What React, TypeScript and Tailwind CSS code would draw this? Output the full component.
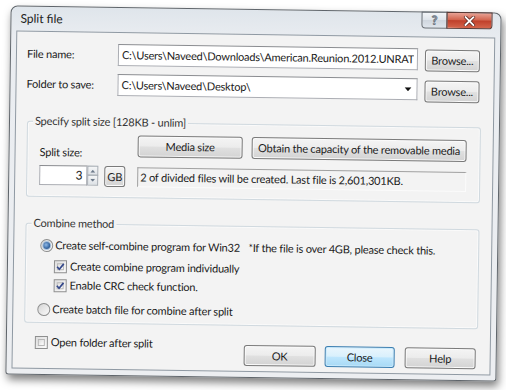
import React from "react";

function Btn({ children, className = "" }: { children: React.ReactNode; className?: string }) {
  return (
    <div
      className={`flex shrink-0 items-center justify-center rounded-[3px] border border-[#7a7a7a] bg-[linear-gradient(#f4f4f4_0%,#ececec_48%,#e0e0e0_52%,#d3d3d3_100%)] shadow-[inset_0_0_0_1px_#fbfbfb] text-[11px] leading-[14px] text-[#1c1c1c] ${className}`}
    >
      {children}
    </div>
  );
}

function Check({ checked }: { checked?: boolean }) {
  return (
    <div className="relative h-[13px] w-[13px] shrink-0 border border-[#8e8f8f] bg-[linear-gradient(135deg,#dedede,#fbfbfb)] p-[2px]">
      <div className="h-full w-full border border-[#b8b8b8] bg-[linear-gradient(135deg,#dcdcdc,#ffffff)]" />
      {checked && (
        <svg className="absolute left-[0px] top-[0px]" width="11" height="11" viewBox="0 0 11 11">
          <path d="M2.2 5.6 L4.4 8 L8.8 2.6" fill="none" stroke="#34488a" strokeWidth="1.7" />
        </svg>
      )}
    </div>
  );
}

function Radio({ checked }: { checked?: boolean }) {
  return (
    <div className="flex h-[13px] w-[13px] shrink-0 items-center justify-center rounded-full border border-[#8e8f8f] bg-[linear-gradient(135deg,#d6d6d6,#fafafa)]">
      {checked ? (
        <div className="h-[7px] w-[7px] rounded-full bg-[radial-gradient(circle_at_40%_40%,#8fb8e6_0%,#3d6ea8_55%,#1f3f6e_100%)] shadow-[0_0_0_1px_#a9c2de]" />
      ) : (
        <div className="h-[9px] w-[9px] rounded-full bg-[linear-gradient(135deg,#d9d9d9,#f7f7f7)]" />
      )}
    </div>
  );
}

export default function App() {
  return (
    <div className="h-[390px] w-[506px] overflow-hidden bg-white pl-[8px] pt-[9px] font-['Lato','Segoe_UI',sans-serif] text-[11px] leading-[14px] tracking-[-0.2px] text-[#1a1a1a]">
      <div className="flex h-[369px] w-[491px] rotate-[0.82deg] flex-col rounded-b-[3px] rounded-t-[7px] border border-[#5f656b] bg-[linear-gradient(#dfe5eb,#eaedf1_30px,#eceef1)] shadow-[2px_5px_9px_rgba(0,0,0,0.5)]">
        {/* title bar */}
        <div className="flex h-[24px] shrink-0 items-start">
          <div className="ml-[9px] mt-[4px] text-[12px] leading-[15px] tracking-normal text-[#222]">Split file</div>
          <div className="-mt-[1px] ml-auto mr-[8px] flex">
            <div className="flex h-[17px] w-[26px] items-center justify-center rounded-bl-[4px] border border-[#6c7278] bg-[linear-gradient(#f3f5f8,#dfe4ea_50%,#cfd6de_51%,#dfe5ec)]">
              <span className="text-[12px] font-bold leading-[12px] text-[#f2f4f6] [-webkit-text-stroke:1px_#707a85]">?</span>
            </div>
            <div className="-ml-[1px] flex h-[17px] w-[46px] items-center justify-center rounded-br-[4px] border border-[#5a3a36] bg-[linear-gradient(#e8a396,#d2654f_45%,#c0402b_52%,#d4654c)]">
              <svg width="12" height="10" viewBox="0 0 12 10">
                <path d="M2 1 L10 9 M10 1 L2 9" stroke="#5a2a24" strokeWidth="3.4" strokeLinecap="round" />
                <path d="M2 1 L10 9 M10 1 L2 9" stroke="#ffffff" strokeWidth="1.8" strokeLinecap="round" />
              </svg>
            </div>
          </div>
        </div>

        {/* client area */}
        <div className="mx-[5px] mb-[5px] flex flex-1 flex-col border border-[#8f99a3] bg-[#f3f3f3]">
          {/* row 1 */}
          <div className="mt-[11px] flex items-start">
            <div className="ml-[10px] flex h-[22px] w-[91px] items-center">File name:</div>
            <div className="flex h-[22px] w-[300px] items-center overflow-hidden whitespace-nowrap border border-[#abadb3] border-t-[#8a8c90] bg-white px-[3px]">
              <span className="w-[292px] overflow-hidden whitespace-nowrap">C:\Users\Naveed\Downloads\American.Reunion.2012.UNRATED</span>
            </div>
            <Btn className="ml-[7px] mt-[1px] h-[22px] w-[55px]">Browse...</Btn>
          </div>

          {/* row 2 */}
          <div className="mt-[7px] flex items-start">
            <div className="ml-[10px] flex h-[22px] w-[91px] items-center">Folder to save:</div>
            <div className="flex h-[22px] w-[300px] items-center overflow-hidden whitespace-nowrap border border-[#abadb3] border-t-[#8a8c90] bg-white pl-[3px]">
              <span>C:\Users\Naveed\Desktop\</span>
              <svg className="ml-auto mr-[5px]" width="7" height="4" viewBox="0 0 7 4">
                <path d="M0 0 L7 0 L3.5 4 Z" fill="#111" />
              </svg>
            </div>
            <Btn className="ml-[7px] mt-[2px] h-[22px] w-[55px]">Browse...</Btn>
          </div>

          {/* group 1 */}
          <div className="relative ml-[11px] mt-[24px] flex h-[76px] w-[454px] rounded-[3px] border border-[#d0d9df] shadow-[inset_0_0_0_1px_#fafafa]">
            <div className="absolute -top-[8px] left-[5px] bg-[#f3f3f3] px-[2px] text-[#333]">Specify split size [128KB - unlim]</div>
            <div className="ml-[12px] flex w-[98px] flex-col">
              <div className="mt-[23px]">Split size:</div>
              <div className="mt-[6px] flex items-start">
                <div className="flex h-[20px] w-[48px] items-center justify-end border border-[#abadb3] border-t-[#8a8c90] bg-white pr-[4px] text-[12px]">3</div>
                <div className="flex h-[20px] w-[11px] flex-col">
                  <div className="flex h-[10px] items-center justify-center border border-[#a8aeb5] bg-[linear-gradient(#f5f6f7,#dde1e6)]">
                    <svg width="5" height="3" viewBox="0 0 5 3"><path d="M0 3 L2.5 0 L5 3 Z" fill="#6d7a8a" /></svg>
                  </div>
                  <div className="-mt-[1px] flex h-[11px] items-center justify-center border border-[#a8aeb5] bg-[linear-gradient(#f5f6f7,#dde1e6)]">
                    <svg width="5" height="3" viewBox="0 0 5 3"><path d="M0 0 L5 0 L2.5 3 Z" fill="#6d7a8a" /></svg>
                  </div>
                </div>
                <Btn className="ml-[6px] h-[21px] w-[21px]">GB</Btn>
              </div>
            </div>
            <div className="flex flex-col pt-[12px]">
              <div className="flex">
                <Btn className="h-[22px] w-[105px]">Media size</Btn>
                <Btn className="ml-[9px] h-[22px] w-[215px]">Obtain the capacity of the removable media</Btn>
              </div>
              <div className="mt-[10px] flex h-[20px] w-[329px] items-center border border-b-[#fbfbfb] border-l-[#a0a0a0] border-r-[#fbfbfb] border-t-[#a0a0a0] pl-[2px]">
                2 of divided files will be created. Last file is 2,601,301KB.
              </div>
            </div>
          </div>

          {/* group 2 */}
          <div className="relative ml-[11px] mt-[26px] flex h-[100px] w-[454px] flex-col rounded-[3px] border border-[#d0d9df] shadow-[inset_0_0_0_1px_#fafafa]">
            <div className="absolute -top-[8px] left-[5px] bg-[#f3f3f3] px-[2px] text-[#333]">Combine method</div>
            <div className="ml-[14px] mt-[13px] flex h-[16px] items-center whitespace-nowrap">
              <Radio checked />
              <span className="ml-[2px] w-[193px]">Create self-combine program for Win32</span>
              <span>*If the file is over 4GB, please check this.</span>
            </div>
            <div className="ml-[28px] mt-[5px] flex h-[16px] items-center">
              <Check checked />
              <span className="ml-[3px]">Create combine program individually</span>
            </div>
            <div className="ml-[28px] mt-[3px] flex h-[16px] items-center">
              <Check checked />
              <span className="ml-[3px]">Enable CRC check function.</span>
            </div>
            <div className="ml-[12px] mt-[8px] flex h-[16px] items-center">
              <Radio />
              <span className="ml-[2px]">Create batch file for combine after split</span>
            </div>
          </div>

          {/* bottom row */}
          <div className="mt-[12px] flex items-start">
            <div className="ml-[22px] flex h-[14px] items-center">
              <Check />
              <span className="ml-[3px]">Open folder after split</span>
            </div>
            <div className="ml-auto mr-[14px] mt-[7px] flex">
              <Btn className="h-[21px] w-[72px]">OK</Btn>
              <div className="ml-[9px] flex h-[21px] w-[70px] items-center justify-center rounded-[3px] border border-[#3c7fb1] bg-[linear-gradient(#eaf6fd_0%,#d9f0fc_48%,#bee6fd_52%,#a7d9f5_100%)] shadow-[inset_0_0_0_1px_#c9eafc] text-[11px] text-[#1c1c1c]">
                Close
              </div>
              <Btn className="ml-[10px] h-[21px] w-[71px]">Help</Btn>
            </div>
          </div>
        </div>
      </div>
    </div>
  );
}
